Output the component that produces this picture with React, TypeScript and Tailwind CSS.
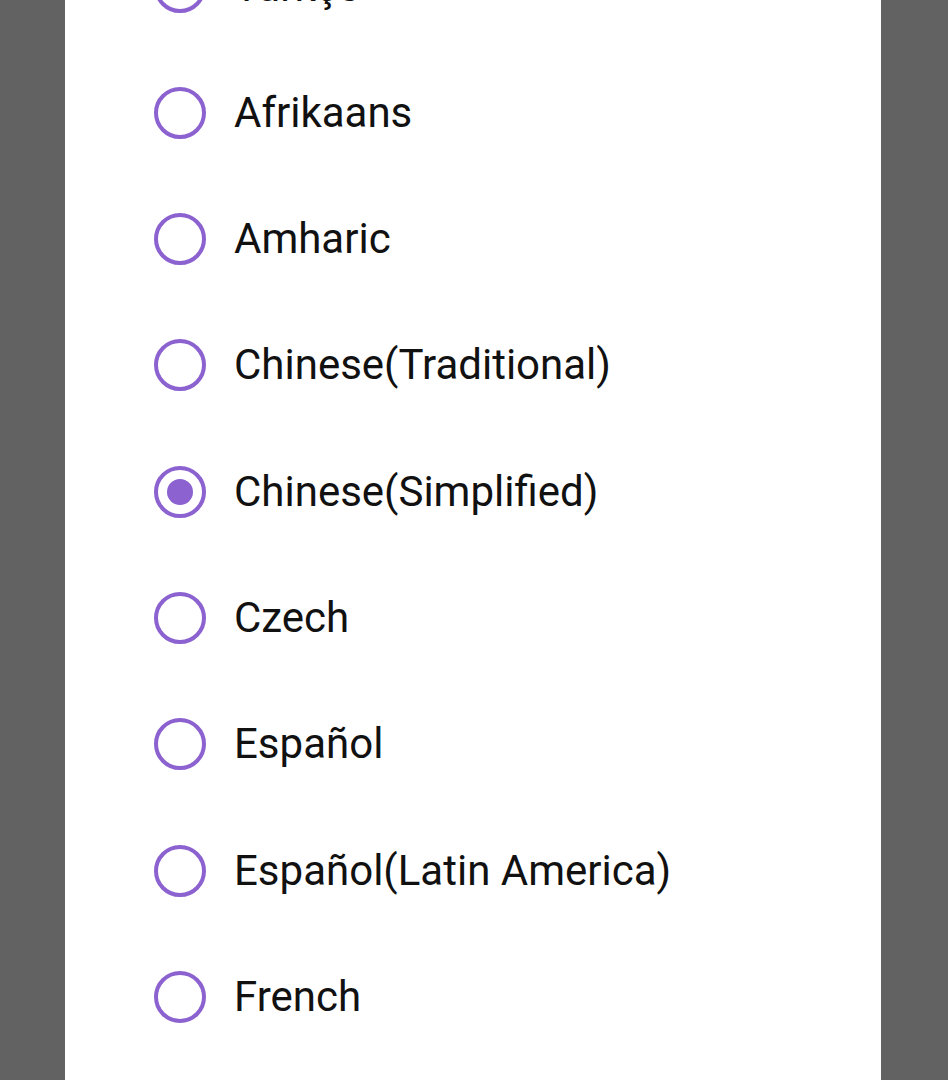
import React, { useState } from 'react';

const languages = [
  'Türkçe',
  'Afrikaans',
  'Amharic',
  'Chinese(Traditional)',
  'Chinese(Simplified)',
  'Czech',
  'Español',
  'Español(Latin America)',
  'French',
];

export default function App() {
  const [selected, setSelected] = useState('Chinese(Simplified)');

  return (
    <div className="w-[948px] h-[1080px] bg-[#626262] overflow-hidden flex justify-center">
      <div className="w-[816px] h-full bg-white overflow-hidden ml-[-2px]">
        <div className="mt-[-76.6px] flex flex-col">
          {languages.map((lang) => {
            const checked = lang === selected;
            return (
              <button
                key={lang}
                onClick={() => setSelected(lang)}
                className="h-[126.3px] shrink-0 flex items-center pl-[89px] text-left"
              >
                <span className="w-[52px] h-[52px] rounded-full border-[4.5px] border-[#8b62cf] flex items-center justify-center">
                  {checked && <span className="w-[26px] h-[26px] rounded-full bg-[#8b62cf]" />}
                </span>
                <span className="ml-[28px] text-[42px] text-[#111] font-['Roboto',sans-serif] leading-none">
                  {lang}
                </span>
              </button>
            );
          })}
        </div>
      </div>
    </div>
  );
}
